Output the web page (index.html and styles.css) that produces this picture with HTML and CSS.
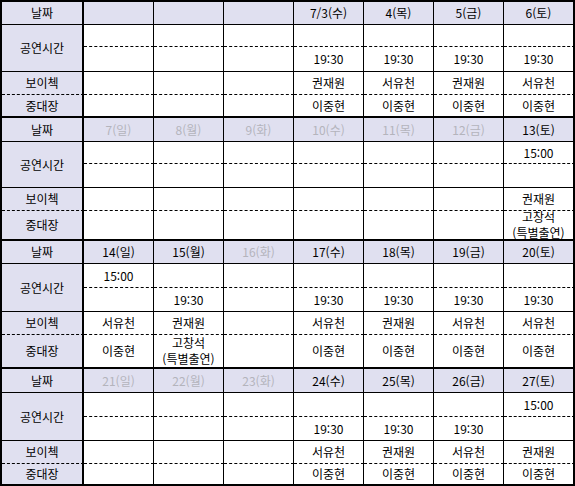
FILE: index.html
```html
<!DOCTYPE html>
<html lang="ko">
<head>
<meta charset="utf-8">
<title>공연 일정</title>
<link rel="stylesheet" href="styles.css">
</head>
<body>
<table class="sched">
  <colgroup>
    <col class="c-lab"><col class="c-day"><col class="c-day"><col class="c-day"><col class="c-day"><col class="c-day"><col class="c-day"><col class="c-end">
  </colgroup>
  <tbody class="b1">
    <tr class="r-head">
      <td class="lab">날짜</td><td class="hd"></td><td class="hd"></td><td class="hd"></td><td class="hd">7/3(수)</td><td class="hd">4(목)</td><td class="hd">5(금)</td><td class="hd">6(토)</td>
    </tr>
    <tr class="r-t1">
      <td class="lab" rowspan="2">공연시간</td><td></td><td></td><td></td><td></td><td></td><td></td><td></td>
    </tr>
    <tr class="r-t2">
      <td></td><td></td><td></td><td>19:30</td><td>19:30</td><td>19:30</td><td>19:30</td>
    </tr>
    <tr class="r-boy">
      <td class="lab">보이첵</td><td></td><td></td><td></td><td>권재원</td><td>서유천</td><td>권재원</td><td>서유천</td>
    </tr>
    <tr class="r-jung">
      <td class="lab">중대장</td><td></td><td></td><td></td><td>이중현</td><td>이중현</td><td>이중현</td><td>이중현</td>
    </tr>
  </tbody>
  <tbody class="b2">
    <tr class="r-head">
      <td class="lab">날짜</td><td class="hd off">7(일)</td><td class="hd off">8(월)</td><td class="hd off">9(화)</td><td class="hd off">10(수)</td><td class="hd off">11(목)</td><td class="hd off">12(금)</td><td class="hd">13(토)</td>
    </tr>
    <tr class="r-t1">
      <td class="lab" rowspan="2">공연시간</td><td></td><td></td><td></td><td></td><td></td><td></td><td>15:00</td>
    </tr>
    <tr class="r-t2">
      <td></td><td></td><td></td><td></td><td></td><td></td><td></td>
    </tr>
    <tr class="r-boy">
      <td class="lab">보이첵</td><td></td><td></td><td></td><td></td><td></td><td></td><td>권재원</td>
    </tr>
    <tr class="r-jung">
      <td class="lab">중대장</td><td></td><td></td><td></td><td></td><td></td><td></td><td><div class="two">고창석<br>(특별출연)</div></td>
    </tr>
  </tbody>
  <tbody class="b3">
    <tr class="r-head">
      <td class="lab">날짜</td><td class="hd">14(일)</td><td class="hd">15(월)</td><td class="hd off">16(화)</td><td class="hd">17(수)</td><td class="hd">18(목)</td><td class="hd">19(금)</td><td class="hd">20(토)</td>
    </tr>
    <tr class="r-t1">
      <td class="lab" rowspan="2">공연시간</td><td>15:00</td><td></td><td></td><td></td><td></td><td></td><td></td>
    </tr>
    <tr class="r-t2">
      <td></td><td>19:30</td><td></td><td>19:30</td><td>19:30</td><td>19:30</td><td>19:30</td>
    </tr>
    <tr class="r-boy">
      <td class="lab">보이첵</td><td>서유천</td><td>권재원</td><td></td><td>서유천</td><td>권재원</td><td>서유천</td><td>서유천</td>
    </tr>
    <tr class="r-jung">
      <td class="lab">중대장</td><td>이중현</td><td><div class="two">고창석<br>(특별출연)</div></td><td></td><td>이중현</td><td>이중현</td><td>이중현</td><td>이중현</td>
    </tr>
  </tbody>
  <tbody class="b4">
    <tr class="r-head">
      <td class="lab">날짜</td><td class="hd off">21(일)</td><td class="hd off">22(월)</td><td class="hd off">23(화)</td><td class="hd">24(수)</td><td class="hd">25(목)</td><td class="hd">26(금)</td><td class="hd">27(토)</td>
    </tr>
    <tr class="r-t1">
      <td class="lab" rowspan="2">공연시간</td><td></td><td></td><td></td><td></td><td></td><td></td><td>15:00</td>
    </tr>
    <tr class="r-t2">
      <td></td><td></td><td></td><td>19:30</td><td>19:30</td><td>19:30</td><td></td>
    </tr>
    <tr class="r-boy">
      <td class="lab">보이첵</td><td></td><td></td><td></td><td>서유천</td><td>권재원</td><td>서유천</td><td>권재원</td>
    </tr>
    <tr class="r-jung">
      <td class="lab">중대장</td><td></td><td></td><td></td><td>이중현</td><td>이중현</td><td>이중현</td><td>이중현</td>
    </tr>
  </tbody>
</table>
</body>
</html>
```

FILE: styles.css
```css
html, body {
  margin: 0;
  padding: 0;
  background: #ffffff;
}

.sched {
  box-sizing: border-box;
  width: 575px;
  table-layout: fixed;
  border-collapse: separate;
  border-spacing: 0;
  border-top: 2px solid #000;
  border-left: 2px solid #000;
  font-family: "Noto Sans CJK KR", "Noto Sans", sans-serif;
  font-size: 12px;
  line-height: 14px;
  color: #000;
}

.c-lab { width: 82px; }
.c-day { width: 70px; }
.c-end { width: 71px; }

.sched td {
  box-sizing: border-box;
  padding: 0;
  text-align: center;
  vertical-align: middle;
  white-space: nowrap;
  border-right: 1px solid #000;
  border-bottom: 1px solid #000;
}

.sched td:last-child {
  border-right-width: 2px;
}

.sched td.lab {
  background: #e0e0f0;
  border-right-width: 2px;
}

.sched td.hd {
  background: #e0e0f0;
}

.sched td.off {
  color: #b4b4bc;
}

.r-t1 td,
.r-boy td {
  border-bottom-style: dashed;
}

.r-t1 td.lab {
  border-bottom-style: solid;
}

.r-jung td {
  border-bottom-width: 2px;
}

.two {
  line-height: 16px;
  margin: -2px 0;
}

/* block 1 */
.b1 .r-head { height: 23px; }
.b1 .r-t1 { height: 22px; }
.b1 .r-t2 { height: 25px; }
.b1 .r-boy { height: 23px; }
.b1 .r-jung { height: 23px; }

/* block 2 */
.b2 .r-head { height: 24px; }
.b2 .r-t1 { height: 22px; }
.b2 .r-t2 { height: 24px; }
.b2 .r-boy { height: 23px; }
.b2 .r-jung { height: 30px; }

/* block 3 */
.b3 .r-head { height: 23px; }
.b3 .r-t1 { height: 24px; }
.b3 .r-t2 { height: 24px; }
.b3 .r-boy { height: 23px; }
.b3 .r-jung { height: 34px; }

/* block 4 */
.b4 .r-head { height: 24px; }
.b4 .r-t1 { height: 24px; }
.b4 .r-t2 { height: 24px; }
.b4 .r-boy { height: 23px; }
.b4 .r-jung { height: 22px; }
```
